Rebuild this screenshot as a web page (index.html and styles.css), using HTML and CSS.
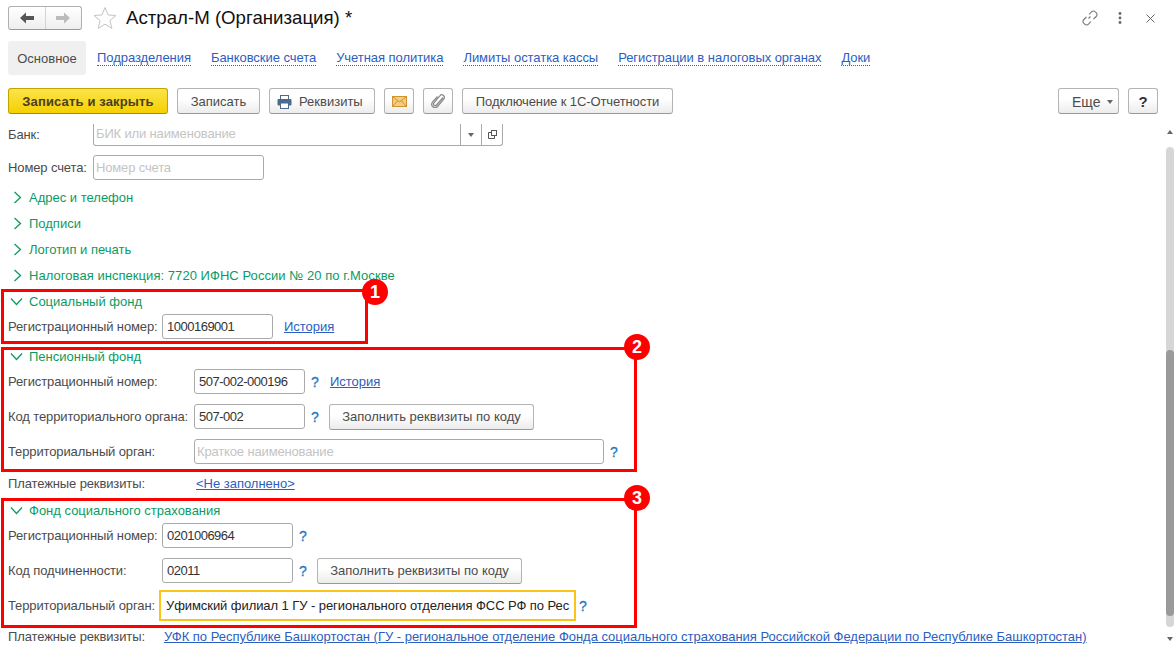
FILE: index.html
```html
<!DOCTYPE html>
<html lang="ru">
<head>
<meta charset="utf-8">
<title>Астрал-М (Организация)</title>
<link rel="stylesheet" href="styles.css">
</head>
<body>
<div class="page">
  <header class="head">
    <div class="navgroup">
      <button class="navbtn"><svg width="16" height="12" viewBox="0 0 16 12"><path d="M1 6l6-5.500v3.500h8v4H7v3.500z" fill="#555"/></svg></button>
      <button class="navbtn"><svg width="16" height="12" viewBox="0 0 16 12"><path d="M15 6L9 .5V4H1v4h8v3.500z" fill="#bbb"/></svg></button>
    </div>
    <svg class="star" width="24" height="24" viewBox="0 0 24 24"><path d="M12 1.500l3 7.400 8 .6-6.100 5.100 2 7.800L12 18.200l-6.900 4.200 2-7.800L1 9.500l8-.6z" fill="none" stroke="#c4c4c4"/></svg>
    <h1 class="title">Астрал-М (Организация) *</h1>
    <div class="headicons">
      <svg class="ic-link" width="16" height="16" viewBox="0 0 16 16" fill="none" stroke="#777" stroke-width="1.100"><path d="M6.500 8.500l2-2M7 4.500l2.500-2.700a2.600 2.600 0 0 1 3.800 0l.9.9a2.600 2.600 0 0 1 0 3.800L11.500 9"/><path d="M4.500 7L1.800 9.500a2.600 2.600 0 0 0 0 3.800l.9.9a2.600 2.600 0 0 0 3.800 0L9 11.500"/></svg>
      <svg class="ic-dots" width="4" height="12" viewBox="0 0 4 12"><circle cx="2" cy="1.500" r="1.400" fill="#666"/><circle cx="2" cy="6" r="1.400" fill="#666"/><circle cx="2" cy="10.500" r="1.400" fill="#666"/></svg>
      <svg class="ic-x" width="9" height="9" viewBox="0 0 9 9"><path d="M.5.500l8 8M8.500.500l-8 8" stroke="#666" fill="none"/></svg>
    </div>
  </header>

  <nav class="tabs">
    <span class="tab-active">Основное</span>
    <a class="tab">Подразделения</a>
    <a class="tab">Банковские счета</a>
    <a class="tab">Учетная политика</a>
    <a class="tab">Лимиты остатка кассы</a>
    <a class="tab">Регистрации в налоговых органах</a>
    <a class="tab">Доки</a>
  </nav>

  <div class="toolbar">
    <button class="btn btn-primary">Записать и закрыть</button>
    <button class="btn btn-save">Записать</button>
    <button class="btn btn-req"><svg width="15" height="14" viewBox="0 0 15 14"><rect x="3.500" y="0.500" width="8" height="4" fill="#fff" stroke="#4d6a8a"/><rect x="0.500" y="4" width="14" height="6.500" rx="1" fill="#4d6a8a"/><rect x="3.500" y="8" width="8" height="5.500" fill="#fff" stroke="#4d6a8a"/></svg>Реквизиты</button>
    <button class="btn btn-icon"><svg width="15" height="11" viewBox="0 0 15 11"><rect x="0.500" y="0.500" width="14" height="10" fill="#f3cd80" stroke="#cf9330"/><path d="M1 1l6.500 5L14 1M1 10l4.500-5M14 10L9.500 5" fill="none" stroke="#cf9330"/></svg></button>
    <button class="btn btn-icon"><svg width="14" height="14" viewBox="0 0 14 14"><path d="M12 3.500L5.500 11a1.700 1.700 0 0 1-2.600-2.200l6-7a2.500 2.500 0 0 1 3.900 3.200L6.500 12.500A3.300 3.300 0 0 1 1.500 8.200L6.500 2.500" fill="none" stroke="#888" stroke-width="1.200"/></svg></button>
    <button class="btn btn-connect">Подключение к 1С-Отчетности</button>
    <div class="toolbar-right">
      <button class="btn btn-more">Еще<i class="caret"></i></button>
      <button class="btn btn-help">?</button>
    </div>
  </div>

  <main class="form">
    <div class="row row-bank">
      <label class="lbl lbl-bank">Банк:</label>
      <div class="combo">
        <span class="combo-text">БИК или наименование</span>
        <span class="combo-btn"><i class="caret"></i></span>
        <span class="combo-btn"><svg width="9" height="9" viewBox="0 0 9 9" fill="none" stroke="#555"><rect x="3.500" y="0.500" width="5" height="5"/><path d="M3.500 2.500H.5v6h6V5.500"/></svg></span>
      </div>
    </div>
    <div class="row row-account">
      <label class="lbl lbl-bank">Номер счета:</label>
      <input class="field field-account" placeholder="Номер счета">
    </div>

    <div class="group"><svg class="chev" width="9" height="13" viewBox="0 0 9 13"><path d="M1.500 1l6 5.500-6 5.500" fill="none" stroke="#0a9b63" stroke-width="1.300"/></svg>Адрес и телефон</div>
    <div class="group"><svg class="chev" width="9" height="13" viewBox="0 0 9 13"><path d="M1.500 1l6 5.500-6 5.500" fill="none" stroke="#0a9b63" stroke-width="1.300"/></svg>Подписи</div>
    <div class="group"><svg class="chev" width="9" height="13" viewBox="0 0 9 13"><path d="M1.500 1l6 5.500-6 5.500" fill="none" stroke="#0a9b63" stroke-width="1.300"/></svg>Логотип и печать</div>
    <div class="group group-long"><svg class="chev" width="9" height="13" viewBox="0 0 9 13"><path d="M1.500 1l6 5.500-6 5.500" fill="none" stroke="#0a9b63" stroke-width="1.300"/></svg>Налоговая инспекция: 7720 ИФНС России № 20 по г.Москве</div>

    <section class="box box-one">
      <span class="badge badge-one">1</span>
      <div class="box-head"><svg class="chev-open" width="13" height="9" viewBox="0 0 13 9"><path d="M1 1.500l5.500 6 5.500-6" fill="none" stroke="#0a9b63" stroke-width="1.300"/></svg>Социальный фонд</div>
      <div class="row row-first">
        <label class="lbl lbl-short">Регистрационный номер:</label>
        <input class="field field-mid field-num" value="1000169001">
        <a class="link link-hist">История</a>
      </div>
    </section>

    <section class="box box-two">
      <span class="badge">2</span>
      <div class="box-head box-head-tight"><svg class="chev-open" width="13" height="9" viewBox="0 0 13 9"><path d="M1 1.500l5.500 6 5.500-6" fill="none" stroke="#0a9b63" stroke-width="1.300"/></svg>Пенсионный фонд</div>
      <div class="row row-first">
        <label class="lbl lbl-long">Регистрационный номер:</label>
        <input class="field field-code field-num" value="507-002-000196">
        <span class="q">?</span>
        <a class="link">История</a>
      </div>
      <div class="row row-next">
        <label class="lbl lbl-long">Код территориального органа:</label>
        <input class="field field-code field-num" value="507-002">
        <span class="q">?</span>
        <button class="btn btn-fill">Заполнить реквизиты по коду</button>
      </div>
      <div class="row row-next">
        <label class="lbl lbl-long">Территориальный орган:</label>
        <input class="field field-wide" placeholder="Краткое наименование">
        <span class="q">?</span>
      </div>
    </section>

    <div class="row row-pay">
      <span class="lbl lbl-long">Платежные реквизиты:</span>
      <a class="link link-pay-a">&lt;Не заполнено&gt;</a>
    </div>

    <section class="box box-three">
      <span class="badge">3</span>
      <div class="box-head"><svg class="chev-open" width="13" height="9" viewBox="0 0 13 9"><path d="M1 1.500l5.500 6 5.500-6" fill="none" stroke="#0a9b63" stroke-width="1.300"/></svg>Фонд социального страхования</div>
      <div class="row row-first">
        <label class="lbl lbl-short">Регистрационный номер:</label>
        <input class="field field-mid2 field-num" value="0201006964">
        <span class="q">?</span>
      </div>
      <div class="row row-next">
        <label class="lbl lbl-short">Код подчиненности:</label>
        <input class="field field-mid2 field-num" value="02011">
        <span class="q">?</span>
        <button class="btn btn-fill">Заполнить реквизиты по коду</button>
      </div>
      <div class="row row-focus">
        <label class="lbl lbl-focus">Территориальный орган:</label>
        <input class="field field-focus" value="Уфимский филиал 1 ГУ - регионального отделения ФСС РФ по Рес">
        <span class="q q-focus">?</span>
      </div>
    </section>

    <div class="row row-pay-two">
      <span class="lbl lbl-short">Платежные реквизиты:</span>
      <a class="link">УФК по Республике Башкортостан (ГУ - региональное отделение Фонда социального страхования Российской Федерации по Республике Башкортостан)</a>
    </div>
  </main>

  <div class="scroll">
    <i class="arrow-up"></i>
    <div class="track"><div class="thumb"></div></div>
    <i class="arrow-down"></i>
  </div>
</div>
</body>
</html>
```

FILE: styles.css
```css
* { box-sizing: border-box; }
html, body { margin: 0; padding: 0; background: #fff; }
body { font: 13px/16px "Liberation Sans", Arial, sans-serif; color: #4b4b4b; }
.page { position: relative; width: 1176px; height: 662px; overflow: hidden; display: flex; flex-direction: column; }

.head { display: flex; align-items: center; height: 41px; padding: 0 0 5px 8px; }
.navgroup { display: flex; width: 74px; height: 24px; border: 1px solid #b0b0b0; border-bottom-color: #999; border-radius: 3px; background: linear-gradient(#fff, #eee); }
.navbtn { flex: 1; padding: 0; border: 0; background: none; display: flex; align-items: center; justify-content: center; }
.navbtn + .navbtn { border-left: 1px solid #d4d4d4; }
.star { margin-left: 11px; margin-right: 9px; }
.title { margin: 0; font-size: 18.67px; font-weight: 400; line-height: 24px; color: #111; }
.headicons { margin-left: auto; margin-right: 21px; display: flex; align-items: center; }
.ic-dots { margin-left: 20px; }
.ic-x { margin-left: 24px; }

.tabs { display: flex; align-items: center; height: 34px; padding-left: 8px; }
.tab-active { display: flex; align-items: center; justify-content: center; width: 78px; height: 34px; padding-top: 1px; background: #f0f0f0; border-radius: 3px; }
.tab { margin-left: 20px; margin-top: 1px; color: #2b5ec0; border-bottom: 1px dotted #2b5ec0; line-height: 14px; letter-spacing: -.05px; }
.tab-active + .tab { margin-left: 11px; }

.toolbar { display: flex; align-items: center; height: 26px; margin-top: 13px; padding-left: 8px; gap: 9px; }
.toolbar-right { margin-left: auto; margin-right: 18px; display: flex; gap: 9px; }
.btn { height: 26px; padding: 1px 0 0; border: 1px solid #b4b4b4; border-bottom-color: #999; border-radius: 3px; background: linear-gradient(#fff 40%, #ececec); font: inherit; color: #4b4b4b; display: inline-flex; align-items: center; justify-content: center; }
.btn-primary { width: 160px; font-weight: 700; letter-spacing: .15px; color: #4a4020; background: linear-gradient(#fbe44a, #f5d000); border-color: #c0a400; border-bottom-color: #a89000; }
.btn-save { width: 83px; }
.btn-req { width: 106px; gap: 7px; justify-content: flex-start; padding-left: 7px; }
.btn-icon { width: 30px; padding-top: 0; }
.btn-connect { width: 211px; letter-spacing: -.1px; }
.btn-more { width: 61px; gap: 6px; font-size: 14px; justify-content: flex-start; padding-left: 13px; }
.btn-help { width: 30px; font-weight: 700; font-size: 15px; color: #333; }
.caret { display: inline-block; width: 0; height: 0; border: 3.500px solid transparent; border-top: 4px solid #666; border-bottom: 0; }

.form { display: flex; flex-direction: column; margin-top: 10px; }
.row { display: flex; align-items: center; }
.lbl { flex: none; padding-left: 8px; letter-spacing: -.12px; }
.row-bank { height: 22px; }
.lbl-bank { width: 93px; }
.combo { display: flex; width: 410px; height: 22px; border: 1px solid #aaa; border-top: 0; border-radius: 0 0 3px 3px; }
.combo-text { flex: 1; padding: 1px 0 0 2px; color: #c4c4c4; line-height: 18px; letter-spacing: -.15px; }
.combo-btn { width: 21px; border-left: 1px solid #aaa; display: flex; align-items: center; justify-content: center; }
.row-account { margin-top: 9px; height: 25px; }

.field { height: 25px; padding: 0 4px; border: 1px solid #aaa; border-radius: 3px; font: inherit; color: #333; background: #fff; outline: 0; }
.field::placeholder { color: #c4c4c4; opacity: 1; letter-spacing: -.15px; }
.field-num { letter-spacing: -.5px; }
.field-account { width: 171px; padding-left: 2px; }

.group { display: flex; align-items: center; height: 26px; padding: 1px 0 0 13px; color: #0a9b63; }
.group-long { letter-spacing: .05px; }
.row-account + .group { margin-top: 4px; }
.chev { margin-right: 7px; margin-top: -1px; }

.box { position: relative; margin-left: 1px; border: 3px solid #f00; }
.box-one { width: 367px; height: 55px; margin-top: 1px; }
.box-two { width: 636px; height: 125px; margin-top: 3px; }
.box-three { width: 636px; height: 130px; margin-top: 4px; }
.box-head { display: flex; align-items: center; height: 18px; padding: 1px 0 0 6px; color: #0a9b63; }
.box-head-tight { height: 12px; margin-bottom: 7px; }
.chev-open { margin-right: 6px; margin-top: -1px; }
.badge { position: absolute; right: -16px; top: -16px; width: 26px; height: 26px; border-radius: 50%; background: #f00; color: #fff; font-size: 18px; font-weight: 700; line-height: 26px; text-align: center; z-index: 1; }
.badge-one { right: -23px; top: -13px; }
.row-first { margin-top: 4px; height: 25px; }
.box-head-tight + .row-first { margin-top: 0; }
.row-next { margin-top: 10px; height: 25px; }
.box .lbl { padding-left: 4px; }
.lbl-short { width: 158px; }
.lbl-long { width: 190px; }
.field-mid { width: 111px; }
.field-mid2 { width: 131px; }
.field-code { width: 111px; }
.field-wide { width: 410px; padding-left: 2px; }
.q { flex: none; margin-left: 6px; width: 10px; color: #1e78c2; font-size: 14px; -webkit-text-stroke: .3px #1e78c2; }
.link { color: #2b5ec0; text-decoration: underline; white-space: nowrap; letter-spacing: -.02px; }
.link-hist { margin-left: 11px; }
.q + .link { margin-left: 9px; }
.btn-fill { flex: none; width: 205px; margin-left: 8px; }
.row-focus { margin-top: 7px; height: 31px; }
.lbl-focus { width: 155px; }
.field-focus { width: 417px; height: 31px; padding: 0 4px 0 5px; border: 2px solid #fcc419; border-radius: 0; color: #222; letter-spacing: -.07px; }
.q-focus { margin-left: 3px; }
.row-pay { height: 22px; padding-top: 1px; }
.row-pay .lbl-long { width: 196px; }
.row-pay-two { height: 18px; }
.row-pay-two .lbl-short { width: 164px; }

.scroll { position: absolute; top: 130px; right: 2px; width: 8px; height: 514px; display: flex; flex-direction: column; align-items: center; }
.track { flex: none; width: 8px; height: 480px; margin: 13px 0 10px; background: #d6d6d6; border-radius: 4px; padding-top: 203px; }
.thumb { height: 266px; background: #9a9a9a; border-radius: 4px; }
.arrow-up { width: 0; height: 0; border: 3.500px solid transparent; border-top: 0; border-bottom: 4px solid #666; }
.arrow-down { width: 0; height: 0; border: 3.500px solid transparent; border-bottom: 0; border-top: 4px solid #666; }
```
